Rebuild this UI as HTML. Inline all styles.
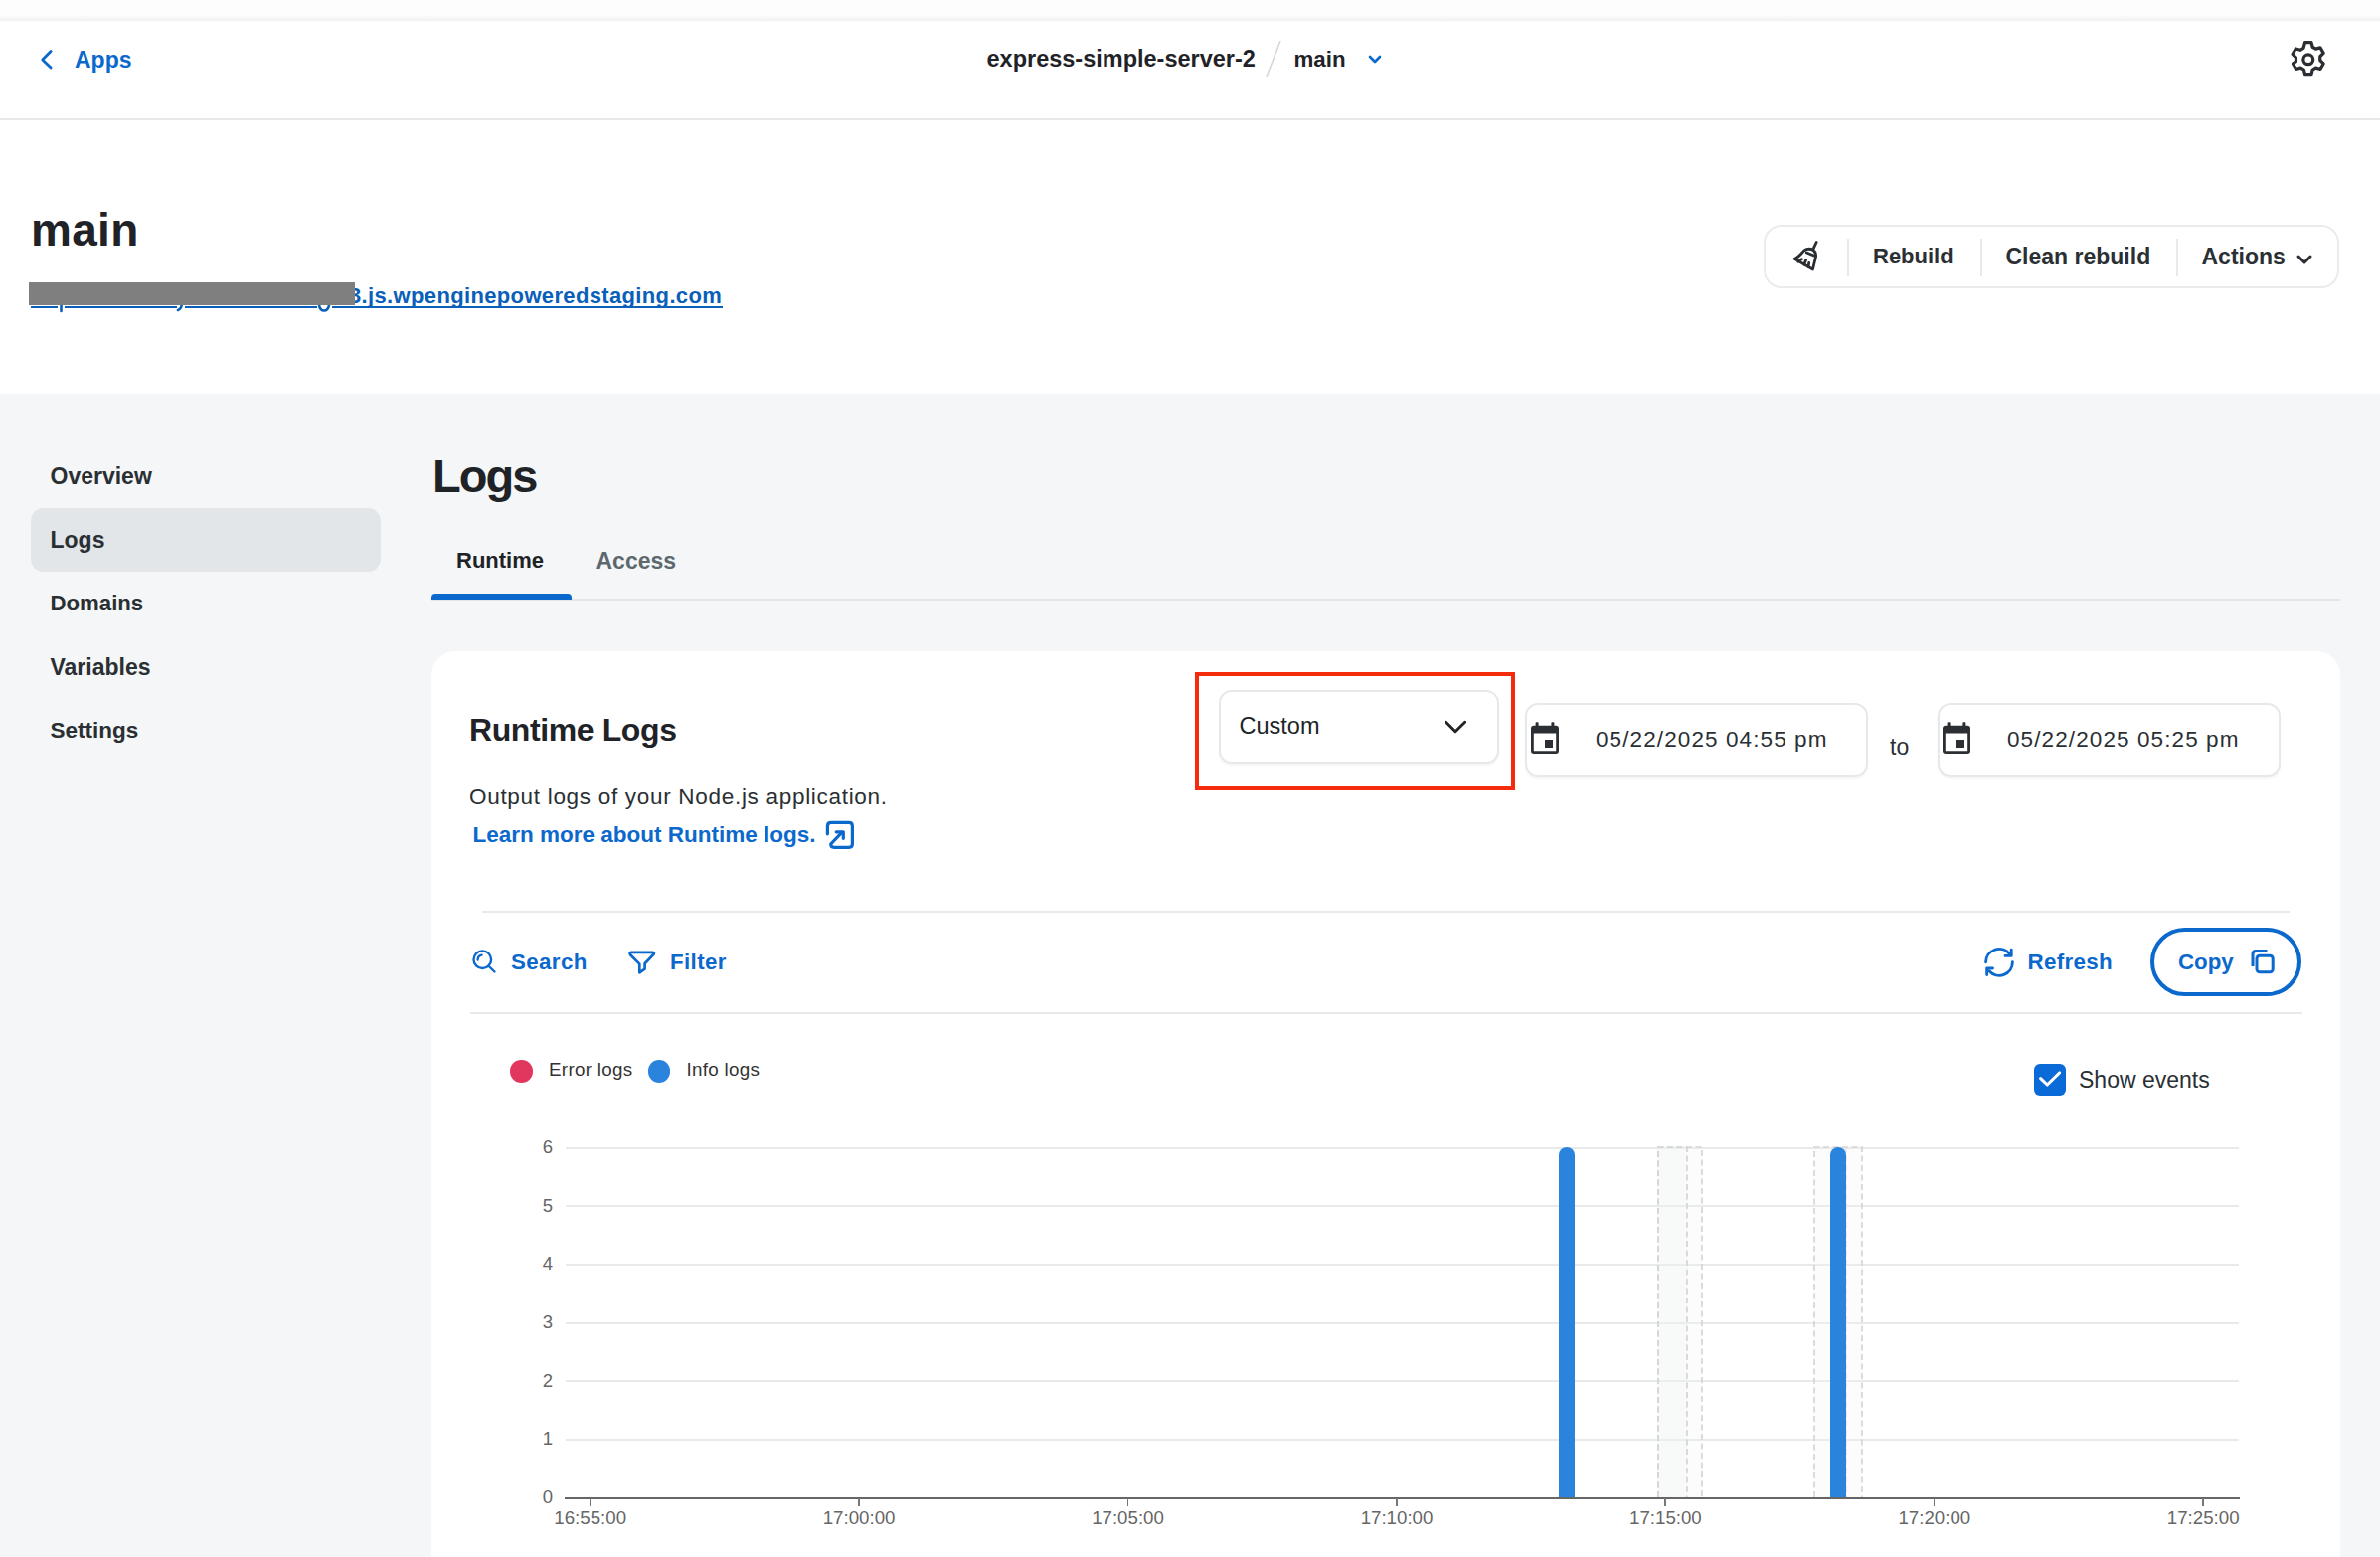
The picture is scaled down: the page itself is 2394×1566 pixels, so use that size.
<!DOCTYPE html>
<html><head><meta charset="utf-8"><title>Logs</title>
<style>
html,body{margin:0;padding:0;}
body{width:2394px;height:1566px;position:relative;overflow:hidden;background:#fff;font-family:"Liberation Sans",sans-serif;}
.t{position:absolute;line-height:1;white-space:nowrap;}
</style></head><body>
<div style="position:absolute;left:0;top:0;width:2394px;height:16px;background:#fdfdfd"></div>
<div style="position:absolute;left:0;top:16px;width:2394px;height:6px;background:linear-gradient(#fbfbfb,#f3f3f3 55%,#f4f4f4 75%,#fdfdfd)"></div>
<div style="position:absolute;left:0;top:119px;width:2394px;height:2px;background:#e6e7e8"></div>
<svg style="position:absolute;left:38px;top:47px" width="18" height="26" viewBox="0 0 18 26"><path d="M13.1 4.4 L4.7 12.9 L13.1 21.1" fill="none" stroke="#0b68cc" stroke-width="2.8" stroke-linecap="round" stroke-linejoin="round"/></svg>
<div class="t" style="left:75px;top:48.53px;font-size:23px;font-weight:700;color:#0b68cc;">Apps</div>

<div class="t" style="left:992.5px;top:48.11px;font-size:23.5px;font-weight:700;color:#1f2327;">express-simple-server-2</div>

<svg style="position:absolute;left:1270px;top:38px" width="22" height="42"><line x1="18" y1="3" x2="4" y2="39" stroke="#d5d7d9" stroke-width="1.6"/></svg>
<div class="t" style="left:1301.5px;top:49.12px;font-size:22.3px;font-weight:700;color:#1f2327;">main</div>

<svg style="position:absolute;left:1374px;top:52px" width="18" height="14" viewBox="0 0 18 14"><path d="M4 5 L9 10 L14 5" fill="none" stroke="#0b68cc" stroke-width="2.6" stroke-linecap="round" stroke-linejoin="round"/></svg>
<svg style="position:absolute;left:2299.2px;top:36.9px" width="45.6" height="45.6" viewBox="0 0 24 24"><path fill="none" stroke="#2b2f33" stroke-width="1.7" stroke-linejoin="round" d="M10.3 3h3.4l.6 2.4 1.7 1 2.4-.7 1.7 2.9-1.8 1.8v2l1.8 1.8-1.7 2.9-2.4-.7-1.7 1-.6 2.4h-3.4l-.6-2.4-1.7-1-2.4.7-1.7-2.9L5.5 13v-2L3.7 9.2l1.7-2.9 2.4.7 1.7-1z"/><circle cx="12" cy="12" r="2.6" fill="none" stroke="#2b2f33" stroke-width="1.7"/></svg>
<div class="t" style="left:31px;top:208.06px;font-size:46px;font-weight:700;color:#1f2327;letter-spacing:0.3px;">main</div>

<div class="t" style="left:351px;top:286.88px;font-size:22px;font-weight:700;color:#0a5fb8;letter-spacing:0.35px;">3.js.wpenginepoweredstaging.com</div>

<div style="position:absolute;left:30.5px;top:308px;width:27.5px;height:2px;background:#0a5fb8"></div>
<div style="position:absolute;left:65px;top:308px;width:113px;height:2px;background:#0a5fb8"></div>
<div style="position:absolute;left:185.5px;top:308px;width:133.0px;height:2px;background:#0a5fb8"></div>
<div style="position:absolute;left:333.5px;top:308px;width:393.5px;height:2px;background:#0a5fb8"></div>
<svg style="position:absolute;left:55px;top:305px" width="290" height="12"><g fill="none" stroke="#0a5fb8" stroke-width="2.6" stroke-linecap="round"><path d="M6.5 1 V8"/><path d="M128 1 Q127 6 124 7"/><path d="M266 2 Q267 7.5 271 7.5 Q275 7.5 276 2"/></g></svg>
<div style="position:absolute;left:29px;top:284px;width:328px;height:23px;background:#7f7f7f"></div>
<div style="position:absolute;left:1774px;top:226px;width:575px;height:60px;border:2px solid #eaebec;border-radius:18px;background:#fff"></div>
<svg style="position:absolute;left:1796px;top:236px" width="40" height="40" viewBox="0 0 40 40"><g fill="none" stroke="#2b2f33" stroke-width="2.8" stroke-linejoin="round" stroke-linecap="round"><path d="M31.2 7.5 L27.8 14.7"/><path d="M9 24.4 Q13 22.5 15.5 19.5 L18.8 15.9 Q23 12.8 28 15.5 Q30.8 17.5 30.6 22 L27.5 35 Z"/><path d="M21.3 18 L28.5 21"/><path d="M16.5 24.7 L12.8 27.2"/><path d="M20.6 25.4 L18.8 30.2"/><path d="M23.7 28.5 L23 32.4"/></g></svg>
<div style="position:absolute;left:1858px;top:240px;width:1.5px;height:38px;background:#e8e9ea"></div>
<div style="position:absolute;left:1992px;top:240px;width:1.5px;height:38px;background:#e8e9ea"></div>
<div style="position:absolute;left:2189px;top:240px;width:1.5px;height:38px;background:#e8e9ea"></div>
<div class="t" style="left:1884px;top:247.38px;font-size:22px;font-weight:700;color:#2a2f33;">Rebuild</div>

<div class="t" style="left:2017.5px;top:246.53px;font-size:23px;font-weight:700;color:#2a2f33;">Clean rebuild</div>

<div class="t" style="left:2214.5px;top:246.53px;font-size:23px;font-weight:700;color:#2a2f33;">Actions</div>

<svg style="position:absolute;left:2308px;top:253px" width="20" height="16" viewBox="0 0 20 16"><path d="M4 5 L10 11 L16 5" fill="none" stroke="#2b2f33" stroke-width="3" stroke-linecap="round" stroke-linejoin="round"/></svg>
<div style="position:absolute;left:0;top:396px;width:2394px;height:1170px;background:#f4f6f7"></div>
<div style="position:absolute;left:31px;top:511px;width:352px;height:64px;border-radius:13px;background:#e2e6e8"></div>
<div class="t" style="left:50.5px;top:467.53px;font-size:23px;font-weight:700;color:#2a2f33;">Overview</div>

<div class="t" style="left:50.5px;top:531.53px;font-size:23px;font-weight:700;color:#2a2f33;">Logs</div>

<div class="t" style="left:50.5px;top:596.21px;font-size:22.2px;font-weight:700;color:#2a2f33;">Domains</div>

<div class="t" style="left:50.5px;top:659.53px;font-size:23px;font-weight:700;color:#2a2f33;">Variables</div>

<div class="t" style="left:50.5px;top:723.95px;font-size:22.5px;font-weight:700;color:#2a2f33;">Settings</div>

<div class="t" style="left:435px;top:455.21px;font-size:47px;font-weight:700;color:#1f2327;letter-spacing:-2px;">Logs</div>

<div class="t" style="left:459px;top:553.38px;font-size:22px;font-weight:700;color:#1f2327;">Runtime</div>

<div class="t" style="left:599.5px;top:552.53px;font-size:23px;font-weight:700;color:#5c686d;">Access</div>

<div style="position:absolute;left:434px;top:602px;width:1920px;height:2px;background:#e4e7e9"></div>
<div style="position:absolute;left:434px;top:597px;width:141px;height:6px;background:#0b68cc;border-radius:4px 4px 0 0"></div>
<div style="position:absolute;left:434px;top:655px;width:1920px;height:1000px;background:#fff;border-radius:24px"></div>
<div class="t" style="left:472px;top:718.21px;font-size:32px;font-weight:700;color:#1f2327;letter-spacing:-0.4px;">Runtime Logs</div>

<div class="t" style="left:472px;top:790.95px;font-size:22.5px;font-weight:400;color:#2a2f33;letter-spacing:0.7px;">Output logs of your Node.js application.</div>

<div class="t" style="left:475.5px;top:828.95px;font-size:22.5px;font-weight:700;color:#0b68cc;">Learn more about Runtime logs.</div>

<svg style="position:absolute;left:820px;top:815px" width="50" height="50" viewBox="0 0 50 50"><g fill="none" stroke="#0b68cc" stroke-width="3.2" stroke-linecap="round" stroke-linejoin="round"><path d="M12.4 23.8 V16 Q12.4 12.4 16 12.4 H34 Q37.4 12.4 37.4 16 V34 Q37.4 37.3 34 37.3 H19 Q15.7 37.3 15.7 34 L26.8 22.3"/><path d="M21.2 21.8 H28.3 V28.3"/></g></svg>
<div style="position:absolute;left:1202px;top:676px;width:314px;height:111px;border:4.5px solid #f42c0d"></div>
<div style="position:absolute;left:1226px;top:694px;width:278px;height:70px;border:2px solid #e7e8e9;border-radius:13px;background:#fff;box-shadow:0 2px 2px rgba(0,0,0,0.04)"></div>
<div class="t" style="left:1246.5px;top:719.11px;font-size:23.5px;font-weight:400;color:#202427;">Custom</div>

<svg style="position:absolute;left:1448px;top:718px" width="32" height="24" viewBox="0 0 32 24"><path d="M6.5 8.2 L16 17.7 L25.7 8.2" fill="none" stroke="#202427" stroke-width="2.9" stroke-linecap="round" stroke-linejoin="round"/></svg>
<div style="position:absolute;left:1534px;top:707px;width:341px;height:70px;border:2px solid #e7e8e9;border-radius:13px;background:#fff;box-shadow:0 2px 2px rgba(0,0,0,0.04)"></div><svg style="position:absolute;left:1540px;top:726px" width="28" height="32" viewBox="0 0 28 32"><rect x="4.6" y="0.2" width="3" height="5" rx="0.8" fill="#2b2f33"/><rect x="20.4" y="0.2" width="3" height="5" rx="0.8" fill="#2b2f33"/><path fill="#2b2f33" fill-rule="evenodd" d="M3 3.8 H25 Q28 3.8 28 6.8 V29 Q28 32 25 32 H3 Q0 32 0 29 V6.8 Q0 3.8 3 3.8 Z M2.8 11.5 V29.2 H25.2 V11.5 Z"/><rect x="14" y="18" width="8" height="8" fill="#2b2f33"/></svg><div class="t" style="left:1605px;top:732.95px;font-size:22.5px;font-weight:400;color:#2a2f33;letter-spacing:1.1px;">05/22/2025 04:55 pm</div>

<div class="t" style="left:1901px;top:739.53px;font-size:23px;font-weight:400;color:#2a2f33;">to</div>

<div style="position:absolute;left:1949px;top:707px;width:341px;height:70px;border:2px solid #e7e8e9;border-radius:13px;background:#fff;box-shadow:0 2px 2px rgba(0,0,0,0.04)"></div><svg style="position:absolute;left:1954px;top:726px" width="28" height="32" viewBox="0 0 28 32"><rect x="4.6" y="0.2" width="3" height="5" rx="0.8" fill="#2b2f33"/><rect x="20.4" y="0.2" width="3" height="5" rx="0.8" fill="#2b2f33"/><path fill="#2b2f33" fill-rule="evenodd" d="M3 3.8 H25 Q28 3.8 28 6.8 V29 Q28 32 25 32 H3 Q0 32 0 29 V6.8 Q0 3.8 3 3.8 Z M2.8 11.5 V29.2 H25.2 V11.5 Z"/><rect x="14" y="18" width="8" height="8" fill="#2b2f33"/></svg><div class="t" style="left:2019px;top:732.95px;font-size:22.5px;font-weight:400;color:#2a2f33;letter-spacing:1.1px;">05/22/2025 05:25 pm</div>

<div style="position:absolute;left:485px;top:915.5px;width:1818px;height:2px;background:#e9eaeb"></div>
<div style="position:absolute;left:473px;top:1017.5px;width:1843px;height:2px;background:#e9eaeb"></div>
<svg style="position:absolute;left:472px;top:952px" width="30" height="30" viewBox="0 0 30 30"><g fill="none" stroke="#0b68cc" stroke-width="2.4" stroke-linecap="round"><circle cx="13.3" cy="13.2" r="8.8"/><path d="M19.8 20 L25.5 25.5"/><path d="M8.6 13.5 A5 5 0 0 1 12.6 8.6"/></g></svg>
<div class="t" style="left:514px;top:956.72px;font-size:22.3px;font-weight:700;color:#0b68cc;letter-spacing:0.4px;">Search</div>

<svg style="position:absolute;left:625px;top:945px" width="45" height="45" viewBox="0 0 45 45"><path d="M10 12.8 H31.6 Q33.6 13 32.6 14.8 L23.6 24.2 V29.6 L18.3 33.3 V24.6 L9 15.2 Q7.8 13.2 10 12.8 Z" fill="none" stroke="#0b68cc" stroke-width="2.7" stroke-linejoin="round"/></svg>
<div class="t" style="left:674px;top:956.72px;font-size:22.3px;font-weight:700;color:#0b68cc;letter-spacing:0.4px;">Filter</div>

<svg style="position:absolute;left:1990px;top:945px" width="45" height="45" viewBox="0 0 45 45"><g fill="none" stroke="#0b68cc" stroke-width="2.9" stroke-linecap="round" stroke-linejoin="round"><path d="M7.6 22.8 A13.4 13.4 0 0 1 31.3 14.3"/><path d="M33.2 10.2 V16.4 H27"/><path d="M34.4 22.8 A13.4 13.4 0 0 1 11 31.8"/><path d="M8.7 35.5 V29 H14.5"/></g></svg>
<div class="t" style="left:2039.5px;top:956.54px;font-size:22.4px;font-weight:700;color:#0b68cc;letter-spacing:0.3px;">Refresh</div>

<div style="position:absolute;left:2163px;top:933px;width:144px;height:61px;border:4px solid #0b68cc;border-radius:36px"></div>
<div class="t" style="left:2191px;top:956.62px;font-size:22.3px;font-weight:700;color:#0b68cc;">Copy</div>

<svg style="position:absolute;left:2261px;top:952px" width="30" height="30" viewBox="0 0 30 30"><g fill="none" stroke="#0b68cc" stroke-width="3" stroke-linejoin="round"><rect x="9" y="9.2" width="16.2" height="16.5" rx="3"/><path d="M5 20 V7.6 Q5 4.6 8 4.6 H19.5"/></g></svg>
<div style="position:absolute;left:513px;top:1066px;width:22.5px;height:22.5px;border-radius:50%;background:#e1375f"></div>
<div class="t" style="left:552px;top:1067.09px;font-size:18.8px;font-weight:400;color:#333;letter-spacing:0.3px;">Error logs</div>

<div style="position:absolute;left:651.5px;top:1066px;width:22.5px;height:22.5px;border-radius:50%;background:#2a83dc"></div>
<div class="t" style="left:690.5px;top:1067.09px;font-size:18.8px;font-weight:400;color:#333;letter-spacing:0.3px;">Info logs</div>

<div style="position:absolute;left:2046px;top:1070px;width:32px;height:32px;border-radius:6px;background:#0a6ad8"></div>
<svg style="position:absolute;left:2046px;top:1070px" width="32" height="32" viewBox="0 0 32 32"><path d="M6.6 14.6 L13.3 21 L25.6 9" fill="none" stroke="#fff" stroke-width="3.1" stroke-linecap="round" stroke-linejoin="round"/></svg>
<div class="t" style="left:2091px;top:1074.53px;font-size:23px;font-weight:400;color:#2a2f33;">Show events</div>

<div style="position:absolute;left:569px;top:1153.5px;width:1683px;height:2px;background:#e8e9ea"></div>
<div class="t" style="left:499px;width:57px;text-align:right;top:1145.3px;font-size:18.5px;color:#666">6</div>
<div style="position:absolute;left:569px;top:1212.0px;width:1683px;height:2px;background:#e8e9ea"></div>
<div class="t" style="left:499px;width:57px;text-align:right;top:1203.8px;font-size:18.5px;color:#666">5</div>
<div style="position:absolute;left:569px;top:1270.5px;width:1683px;height:2px;background:#e8e9ea"></div>
<div class="t" style="left:499px;width:57px;text-align:right;top:1262.3px;font-size:18.5px;color:#666">4</div>
<div style="position:absolute;left:569px;top:1329.5px;width:1683px;height:2px;background:#e8e9ea"></div>
<div class="t" style="left:499px;width:57px;text-align:right;top:1321.3px;font-size:18.5px;color:#666">3</div>
<div style="position:absolute;left:569px;top:1388.0px;width:1683px;height:2px;background:#e8e9ea"></div>
<div class="t" style="left:499px;width:57px;text-align:right;top:1379.8px;font-size:18.5px;color:#666">2</div>
<div style="position:absolute;left:569px;top:1446.5px;width:1683px;height:2px;background:#e8e9ea"></div>
<div class="t" style="left:499px;width:57px;text-align:right;top:1438.3px;font-size:18.5px;color:#666">1</div>
<div class="t" style="left:499px;width:57px;text-align:right;top:1497.3px;font-size:18.5px;color:#666">0</div>
<svg style="position:absolute;left:1667px;top:1153px" width="46" height="354" viewBox="0 0 46 354"><rect x="0" y="0" width="46" height="354" fill="rgba(240,242,243,0.22)"/><g stroke="#d3d5d7" stroke-width="1.7" stroke-dasharray="6 3.5" fill="none"><path d="M1 353 V1 H45 V353"/></g></svg>
<svg style="position:absolute;left:1667px;top:1153px" width="31" height="354" viewBox="0 0 31 354"><rect x="0" y="0" width="31" height="354" fill="rgba(240,242,243,0.3)"/><g stroke="#d3d5d7" stroke-width="1.7" stroke-dasharray="6 3.5" fill="none"><path d="M1 353 V1 H30 V353"/></g></svg>
<svg style="position:absolute;left:1824px;top:1153px" width="50" height="354" viewBox="0 0 50 354"><rect x="0" y="0" width="50" height="354" fill="rgba(240,242,243,0.22)"/><g stroke="#d3d5d7" stroke-width="1.7" stroke-dasharray="6 3.5" fill="none"><path d="M1 353 V1 H49 V353"/></g></svg>
<svg style="position:absolute;left:1855px;top:1153px" width="4" height="354"><path d="M2 0 V353" stroke="#dfe1e3" stroke-width="1.4" stroke-dasharray="6 3.5"/></svg>
<div style="position:absolute;left:1568px;top:1153.5px;width:16px;height:353px;background:#2a83dc;border-radius:8px 8px 0 0"></div>
<div style="position:absolute;left:1841px;top:1153.5px;width:16px;height:353px;background:#2a83dc;border-radius:8px 8px 0 0"></div>
<div style="position:absolute;left:568px;top:1505.5px;width:1685px;height:2px;background:#666"></div>
<div style="position:absolute;left:592.7px;top:1507px;width:1.5px;height:8px;background:#777"></div>
<div class="t" style="left:533.7px;width:120px;text-align:center;top:1518.2px;font-size:18.7px;color:#666">16:55:00</div>
<div style="position:absolute;left:863.1px;top:1507px;width:1.5px;height:8px;background:#777"></div>
<div class="t" style="left:804.1px;width:120px;text-align:center;top:1518.2px;font-size:18.7px;color:#666">17:00:00</div>
<div style="position:absolute;left:1133.5px;top:1507px;width:1.5px;height:8px;background:#777"></div>
<div class="t" style="left:1074.5px;width:120px;text-align:center;top:1518.2px;font-size:18.7px;color:#666">17:05:00</div>
<div style="position:absolute;left:1404.0px;top:1507px;width:1.5px;height:8px;background:#777"></div>
<div class="t" style="left:1345.0px;width:120px;text-align:center;top:1518.2px;font-size:18.7px;color:#666">17:10:00</div>
<div style="position:absolute;left:1674.4px;top:1507px;width:1.5px;height:8px;background:#777"></div>
<div class="t" style="left:1615.4px;width:120px;text-align:center;top:1518.2px;font-size:18.7px;color:#666">17:15:00</div>
<div style="position:absolute;left:1944.8px;top:1507px;width:1.5px;height:8px;background:#777"></div>
<div class="t" style="left:1885.8px;width:120px;text-align:center;top:1518.2px;font-size:18.7px;color:#666">17:20:00</div>
<div style="position:absolute;left:2215.2px;top:1507px;width:1.5px;height:8px;background:#777"></div>
<div class="t" style="left:2156.2px;width:120px;text-align:center;top:1518.2px;font-size:18.7px;color:#666">17:25:00</div>
</body></html>
